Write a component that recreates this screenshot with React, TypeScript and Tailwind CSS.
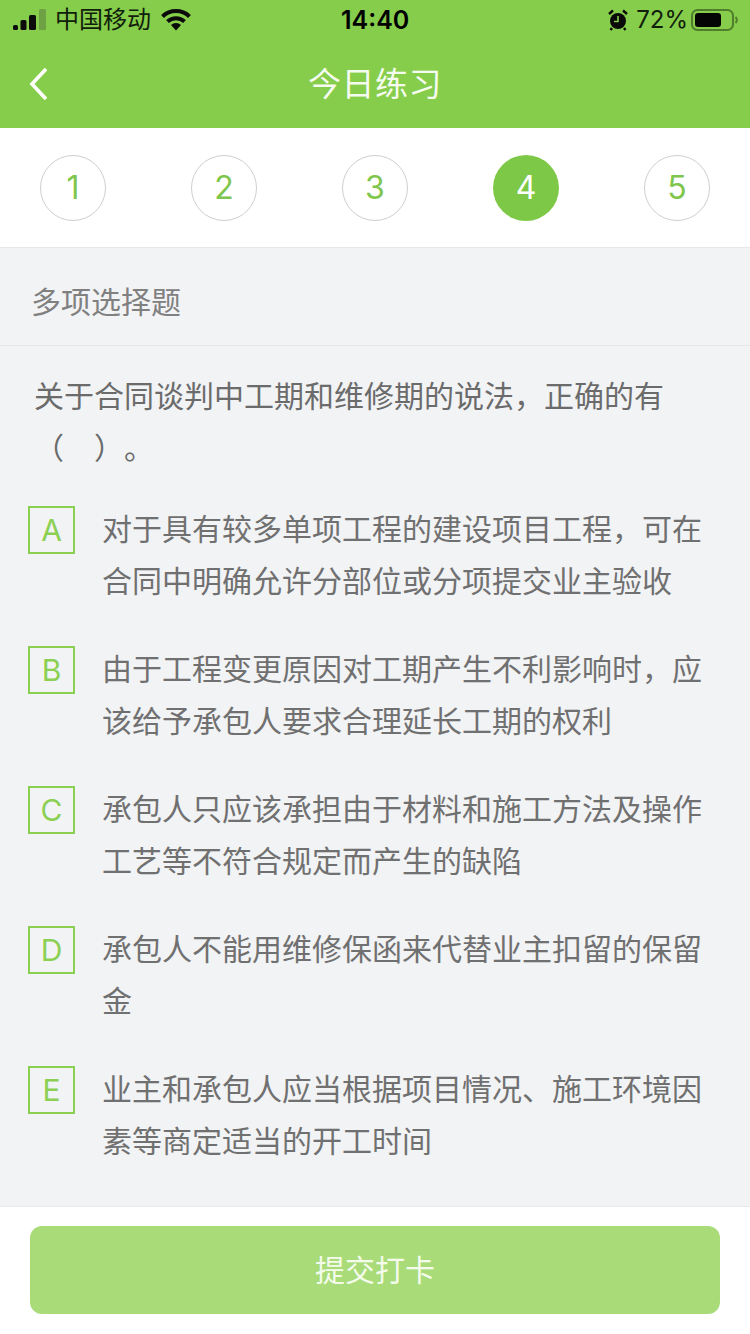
const steps = [1, 2, 3, 4, 5];

const options = [
  { key: 'A', text: '对于具有较多单项工程的建设项目工程，可在合同中明确允许分部位或分项提交业主验收' },
  { key: 'B', text: '由于工程变更原因对工期产生不利影响时，应该给予承包人要求合理延长工期的权利' },
  { key: 'C', text: '承包人只应该承担由于材料和施工方法及操作工艺等不符合规定而产生的缺陷' },
  { key: 'D', text: '承包人不能用维修保函来代替业主扣留的保留金' },
  { key: 'E', text: '业主和承包人应当根据项目情况、施工环境因素等商定适当的开工时间' },
];

const StatusBar = () => {
  return (
    <div className="flex h-10 items-center justify-between pl-[13px] pr-3 text-black">
      <div className="flex items-center">
        <svg width="34" height="22" viewBox="0 0 34 22" className="shrink-0">
          <rect x="0" y="16" width="5" height="5" rx="1.5" fill="#0c0c0c" />
          <rect x="7.5" y="11" width="6" height="10" rx="1.5" fill="#0c0c0c" />
          <rect x="16" y="6" width="7" height="15" rx="1.5" fill="#0c0c0c" />
          <rect x="26" y="0" width="7" height="21" rx="1.5" fill="#6ea044" />
        </svg>
        <span className="ml-[8px] text-[24px] leading-none text-[#10200a]">中国移动</span>
        <svg width="30" height="22" viewBox="0 0 30 22" className="ml-[10px] shrink-0">
          <path d="M1.5 7.5 A19.5 19.5 0 0 1 28.5 7.5" fill="none" stroke="#0a0a0a" strokeWidth="4" />
          <path d="M6.5 12.5 A12.5 12.5 0 0 1 23.5 12.5" fill="none" stroke="#0a0a0a" strokeWidth="4" />
          <path d="M10 16 L15 21.5 L20 16 A7 7 0 0 0 10 16 Z" fill="#0a0a0a" />
        </svg>
      </div>
      <span className="absolute left-[341px] text-[25px] font-semibold leading-none">14:40</span>
      <div className="flex items-center">
        <svg width="20" height="22" viewBox="0 0 20 22" className="shrink-0">
          <circle cx="10" cy="12" r="8" fill="#0a0a0a" />
          <path d="M10 7 V12.5 H6" fill="none" stroke="#86cd4b" strokeWidth="1.6" />
          <path d="M1 5 L5 1.5 M19 5 L15 1.5 M4 19 L2.5 21 M16 19 L17.5 21" stroke="#0a0a0a" strokeWidth="2.4" />
        </svg>
        <span className="ml-[8px] text-[24px] leading-none text-[#10200a]">72%</span>
        <svg width="47" height="22" viewBox="0 0 47 22" className="ml-[3px] shrink-0">
          <rect x="1" y="1" width="41" height="20" rx="5.5" fill="none" stroke="#4f7d2b" strokeWidth="2" />
          <rect x="4" y="4" width="26" height="14" rx="3" fill="#050505" />
          <path d="M44.5 8 A4 4 0 0 1 44.5 14" fill="none" stroke="#4f7d2b" strokeWidth="2" />
        </svg>
      </div>
    </div>
  );
};

const NavBar = () => {
  return (
    <div className="relative flex h-[88px] items-center justify-center">
      <svg width="20" height="34" viewBox="0 0 20 34" className="absolute left-[29px] top-[27px]">
        <path d="M17 2 L3 17 L17 32" fill="none" stroke="#ffffff" strokeWidth="3.6" />
      </svg>
      <span className="text-[33px] leading-none tracking-[0.5px] text-[#f6fbf0]">今日练习</span>
    </div>
  );
};

const App = () => {
  return (
    <div className="flex h-[1334px] w-[750px] flex-col overflow-hidden bg-[#f2f3f5] font-['Inter','Noto_Sans_CJK_SC',sans-serif]">
      <div className="bg-[#86cd4b]">
        <StatusBar />
        <NavBar />
      </div>

      <div className="flex h-[120px] justify-between border-b border-[#e8e8e8] bg-white px-10 pt-[27px]">
        {steps.map((step) =>
          step === 4 ? (
            <div
              key={step}
              className="flex h-[66px] w-[66px] items-center justify-center rounded-full bg-[#7dc846] text-[32px] text-white"
            >
              {step}
            </div>
          ) : (
            <div
              key={step}
              className="flex h-[66px] w-[66px] items-center justify-center rounded-full border border-[#cfcfcf] text-[32px] text-[#7fc64c]"
            >
              {step}
            </div>
          ),
        )}
      </div>

      <div className="flex h-[98px] items-center border-b border-[#e6e7e9] pl-[31px] pt-[10px] text-[30px] leading-none text-[#808080]">
        多项选择题
      </div>

      <div className="flex-1 pt-6">
        <p className="w-[670px] pl-[34px] text-[30px] leading-[52px] text-[#6b6b6b] [text-spacing-trim:space-all]">
          关于合同谈判中工期和维修期的说法，正确的有（　）。
        </p>

        <div className="flex flex-col gap-9 pl-7 pt-[29px]">
          {options.map((option) => (
            <div key={option.key} className="flex items-start">
              <div className="mt-[3px] flex h-[48px] w-[47px] shrink-0 items-center justify-center border-2 border-[#8bd053] text-[30px] text-[#8bd053]">
                {option.key}
              </div>
              <p className="ml-[27px] w-[600px] text-[30px] leading-[52px] text-[#707070]">{option.text}</p>
            </div>
          ))}
        </div>
      </div>

      <div className="border-t border-[#e8e9eb] bg-white px-[30px] pb-5 pt-[19px]">
        <div className="flex h-[88px] items-center justify-center rounded-[12px] bg-[#a9db79] text-[30px] text-[#f4fbec]">
          提交打卡
        </div>
      </div>
    </div>
  );
};

export default App;
